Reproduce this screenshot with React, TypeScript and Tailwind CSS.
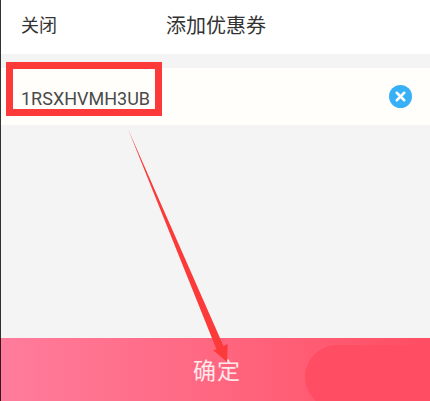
import { X } from 'lucide-react';

const font = { fontFamily: '"Liberation Sans", "Noto Sans CJK SC", sans-serif' };

export default function App() {
  return (
    <div className="relative flex flex-col w-[430px] h-[401px] overflow-hidden bg-[#f4f4f5]" style={font}>
      {/* header */}
      <div className="flex items-center h-[54px] bg-white text-[#333] pb-[2px]">
        <span className="ml-[21px] w-[145px] text-[18px]">关闭</span>
        <span className="text-[20px]">添加优惠券</span>
      </div>

      {/* coupon input */}
      <div className="flex items-center justify-between h-[57px] mt-[14px] pl-[21px] pr-[18px] bg-[#fffefb]">
        <span className="font-['Roboto'] text-[#4a4a4a] text-[18px] leading-none mt-[4px]">1RSXHVMH3UB</span>
        <span className="flex items-center justify-center w-[23px] h-[23px] rounded-full bg-[#38b0f8]">
          <X className="w-[15px] h-[15px] text-white" strokeWidth={4} />
        </span>
      </div>

      {/* confirm button */}
      <div className="relative flex items-center justify-center mt-auto h-[63px] overflow-hidden bg-gradient-to-r from-[#ff7c9c] to-[#ff4d63]">
        <span className="text-white/85 text-[23px] mt-[4px] ml-[4px] tracking-[1px]">确定</span>
        <div className="absolute left-[305px] top-[7px] w-[160px] h-[64px] rounded-full bg-[#ff4e64]" />
      </div>

      {/* red annotation */}
      <div className="absolute left-[6px] top-[62px] w-[156px] h-[54px] border-[7px] border-[#fd3a3a]" />
      <svg className="absolute left-0 top-0" width="430" height="401" viewBox="0 0 430 401">
        <polygon points="128,129 223.5,346 227.7,344 227,362 213,350 216.5,349.5" fill="#fd3a3a" />
      </svg>

      {/* left screen edge */}
      <div className="absolute left-0 top-0 w-px h-full bg-black/80" />
    </div>
  );
}
